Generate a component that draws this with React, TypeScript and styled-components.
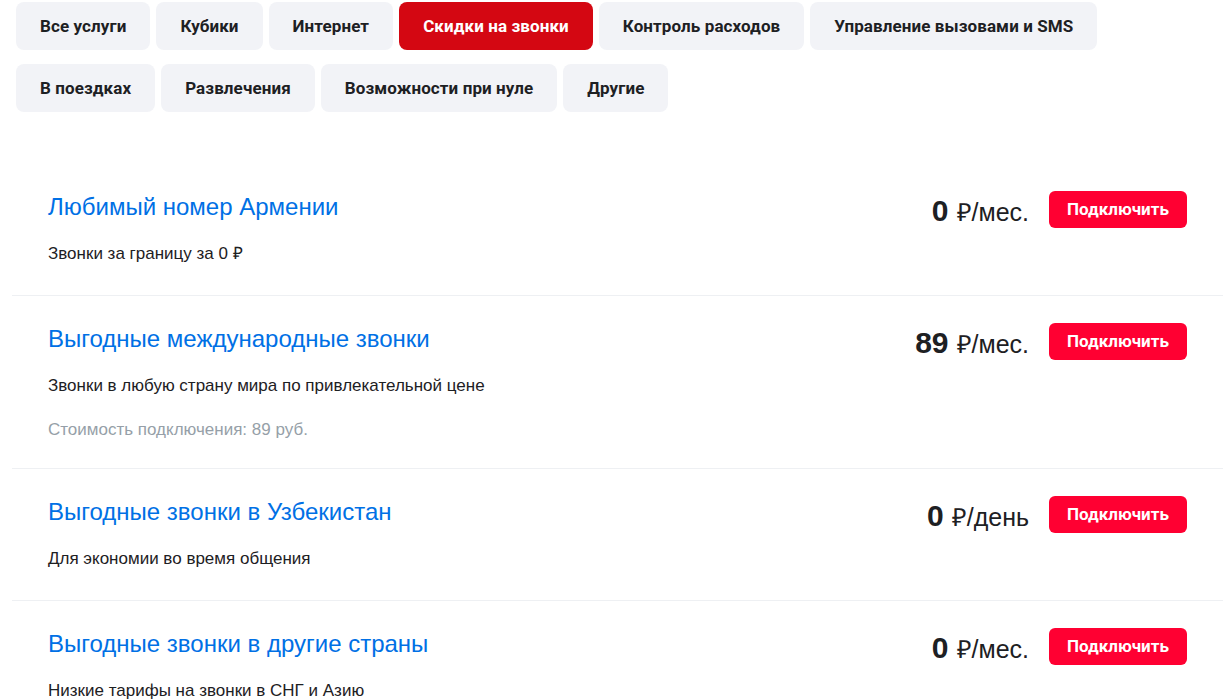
import styled, { createGlobalStyle } from "styled-components";

const GlobalStyle = createGlobalStyle`
  body {
    margin: 0;
    background: #fff;
    font-family: "Liberation Sans", Arial, sans-serif;
    color: #1d2023;
  }
`;

const Page = styled.div`
  width: 1223px;
  overflow: hidden;
`;

const Tabs = styled.div`
  display: flex;
  flex-direction: column;
  gap: 14px;
  padding: 2px 0 0 16px;
`;

const TabRow = styled.div`
  display: flex;
  gap: 6px;
`;

const Tab = styled.button<{ $active?: boolean }>`
  border: none;
  border-radius: 8px;
  height: 48px;
  padding: 0 24px 1px;
  font-family: Roboto, "Liberation Sans", sans-serif;
  font-size: 17px;
  font-weight: 700;
  letter-spacing: 0.1px;
  color: ${(p) => (p.$active ? "#fff" : "#1d2023")};
  background: ${(p) => (p.$active ? "#d40712" : "#f2f3f7")};
  cursor: pointer;
`;

const List = styled.div`
  margin: 52px 0 0 12px;
`;

const Item = styled.div`
  display: flex;
  justify-content: space-between;
  align-items: flex-start;
  padding: 29px 36px 29px 36px;
  border-bottom: 1px solid #eef0f3;
  &:last-child {
    border-bottom: none;
  }
`;

const Info = styled.div`
  display: flex;
  flex-direction: column;
`;

const Title = styled.a`
  font-size: 24px;
  line-height: 28px;
  color: #0070e5;
  text-decoration: none;
  cursor: pointer;
`;

const Desc = styled.div`
  margin-top: 21px;
  font-size: 17px;
  line-height: 24px;
`;

const Extra = styled.div`
  margin-top: 23px;
  font-size: 17px;
  line-height: 18px;
  color: #969fa8;
`;

const Side = styled.div`
  display: flex;
  align-items: center;
  gap: 20px;
  margin-top: -3px;
`;

const Price = styled.div`
  display: flex;
  align-items: baseline;
  gap: 8px;
  margin-top: 4px;
`;

const Amount = styled.span`
  font-size: 30px;
  font-weight: 700;
`;

const Unit = styled.span`
  font-size: 25px;
`;

const ConnectButton = styled.button`
  border: none;
  border-radius: 6px;
  height: 37px;
  width: 138px;
  background: #ff0032;
  color: #fff;
  font-family: Roboto, "Liberation Sans", sans-serif;
  font-size: 17px;
  font-weight: 700;
  cursor: pointer;
`;

const tabRows = [
  [
    "Все услуги",
    "Кубики",
    "Интернет",
    "Скидки на звонки",
    "Контроль расходов",
    "Управление вызовами и SMS",
  ],
  ["В поездках", "Развлечения", "Возможности при нуле", "Другие"],
];

const services = [
  {
    title: "Любимый номер Армении",
    desc: "Звонки за границу за 0 ₽",
    amount: "0",
    unit: "₽/мес.",
  },
  {
    title: "Выгодные международные звонки",
    desc: "Звонки в любую страну мира по привлекательной цене",
    extra: "Стоимость подключения: 89 руб.",
    amount: "89",
    unit: "₽/мес.",
  },
  {
    title: "Выгодные звонки в Узбекистан",
    desc: "Для экономии во время общения",
    amount: "0",
    unit: "₽/день",
  },
  {
    title: "Выгодные звонки в другие страны",
    desc: "Низкие тарифы на звонки в СНГ и Азию",
    amount: "0",
    unit: "₽/мес.",
  },
];

export default function App() {
  return (
    <Page>
      <GlobalStyle />
      <Tabs>
        {tabRows.map((row, i) => (
          <TabRow key={i}>
            {row.map((t) => (
              <Tab key={t} $active={t === "Скидки на звонки"}>
                {t}
              </Tab>
            ))}
          </TabRow>
        ))}
      </Tabs>
      <List>
        {services.map((s) => (
          <Item key={s.title}>
            <Info>
              <Title>{s.title}</Title>
              <Desc>{s.desc}</Desc>
              {s.extra && <Extra>{s.extra}</Extra>}
            </Info>
            <Side>
              <Price>
                <Amount>{s.amount}</Amount>
                <Unit>{s.unit}</Unit>
              </Price>
              <ConnectButton>Подключить</ConnectButton>
            </Side>
          </Item>
        ))}
      </List>
    </Page>
  );
}
